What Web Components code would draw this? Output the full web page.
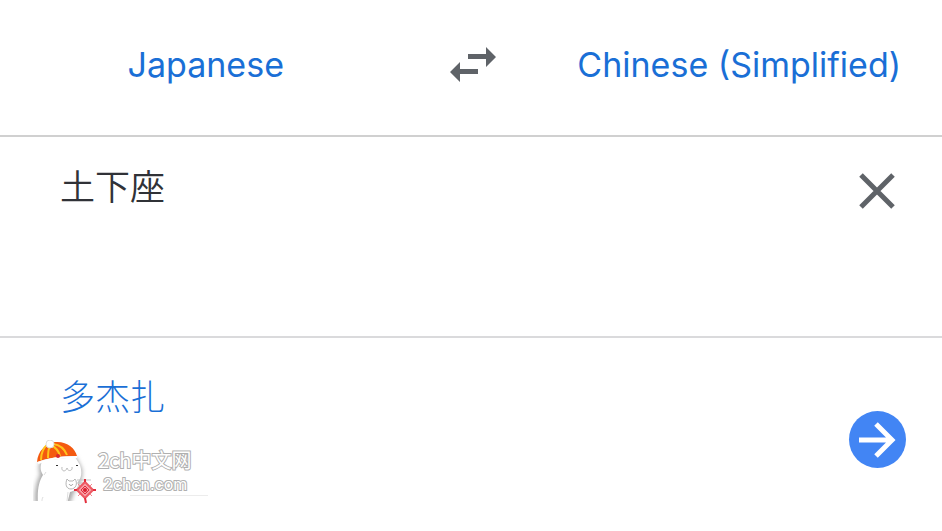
<!DOCTYPE html>
<html lang="en">
<head>
<meta charset="utf-8">
<meta name="viewport" content="width=device-width, initial-scale=1">
<title>Translate</title>
<style>
  body {
    margin: 0;
    background: #fff;
    font-family: Inter, "Liberation Sans", "Noto Sans CJK SC", sans-serif;
  }
</style>
</head>
<body>
<translate-app></translate-app>

<script>
class LanguageBar extends HTMLElement {
  constructor() {
    super();
    this.attachShadow({ mode: 'open' });
  }

  connectedCallback() {
    this.shadowRoot.innerHTML = `
    <style>
    :host {
      display: grid;
      grid-template-columns: 1fr 128px 1fr;
      align-items: center;
      height: 137px;
      padding: 0 0 6px 3px;
      box-sizing: border-box;
      border-bottom: 2px solid #d0d0d0;
    }

    button {
      padding: 0;
      border: none;
      background: none;
      color: #1a6fd6;
      font: inherit;
      font-size: 34px;
      line-height: 48px;
      white-space: nowrap;
      cursor: pointer;
    }

    svg {
      display: block;
      margin: auto;
    }
    </style>

    <button type="button"><slot name="from"></slot></button>
    <button type="button" aria-label="Swap languages">
      <svg width="46" height="36" viewBox="0 0 46 36" fill="#5f6368">
        <path d="M18 7h18V0l10 10-10 10v-8H18zM28 22H10v-7L0 25l10 10v-8h18z"/>
      </svg>
    </button>
    <button type="button"><slot name="to"></slot></button>
    `;
  }
}

class SourceText extends HTMLElement {
  constructor() {
    super();
    this.attachShadow({ mode: 'open' });
  }

  connectedCallback() {
    this.shadowRoot.innerHTML = `
    <style>
    :host {
      display: flex;
      align-items: flex-start;
      min-height: 201px;
      padding: 22px 45px 0 60px;
      box-sizing: border-box;
      border-bottom: 2px solid #dadadc;
    }

    textarea {
      flex: 1;
      height: 144px;
      padding: 0;
      border: none;
      outline: none;
      resize: none;
      background: none;
      color: #303237;
      font-family: "Noto Sans CJK JP", sans-serif;
      font-size: 35px;
      font-weight: 350;
      line-height: 52px;
    }

    button {
      margin-top: 12px;
      padding: 0;
      border: none;
      background: none;
      cursor: pointer;
    }

    svg {
      display: block;
    }
    </style>

    <textarea lang="ja" aria-label="Source text"></textarea>
    <button type="button" aria-label="Clear">
      <svg width="40" height="40" viewBox="0 0 40 40" stroke="#5f6368" stroke-width="5">
        <path d="M4 4l32 32M36 4L4 36"/>
      </svg>
    </button>
    `;
    const field = this.shadowRoot.querySelector('textarea');
    field.value = this.getAttribute('value');
    this.shadowRoot.querySelector('button').addEventListener('click', () => {
      field.value = '';
      field.focus();
    });
  }
}

class TranslationResult extends HTMLElement {
  constructor() {
    super();
    this.attachShadow({ mode: 'open' });
  }

  connectedCallback() {
    this.shadowRoot.innerHTML = `
    <style>
    :host {
      display: flex;
      justify-content: space-between;
      align-items: flex-start;
      padding: 31px 36px 60px 60px;
    }

    p {
      margin: 0;
      color: #1a6fd6;
      font-family: "Noto Sans CJK SC", sans-serif;
      font-size: 35px;
      font-weight: 300;
      line-height: 52px;
    }

    button {
      margin-top: 42px;
      padding: 0;
      border: none;
      border-radius: 50%;
      background: #4285f4;
      cursor: pointer;
    }

    svg {
      display: block;
    }
    </style>

    <p lang="zh-Hans"><slot></slot></p>
    <button type="button" aria-label="Open translation">
      <svg width="57" height="57" viewBox="0 0 57 57" fill="none" stroke="#fff" stroke-width="5">
        <path d="M10 29h33M27 13l16 16-16 16"/>
      </svg>
    </button>
    `;
  }
}

class SiteMark extends HTMLElement {
  constructor() {
    super();
    this.attachShadow({ mode: 'open' });
  }

  connectedCallback() {
    this.shadowRoot.innerHTML = `
    <style>
    :host {
      display: flex;
      align-items: flex-start;
      pointer-events: none;
    }

    svg {
      display: block;
    }

    div {
      padding-top: 6px;
      color: #fff;
      font-family: "Noto Sans CJK SC", sans-serif;
      -webkit-text-stroke: 2px #b0b0b0;
      paint-order: stroke fill;
    }

    span {
      display: block;
      font-size: 20px;
      line-height: 28px;
      white-space: nowrap;
    }

    span + span {
      padding-left: 5px;
      font-family: Inter, sans-serif;
      font-size: 16px;
      line-height: 21px;
    }
    </style>

    <svg width="65" height="64" viewBox="0 0 65 64" fill="none">
      <defs>
        <filter id="soft" x="-30%" y="-30%" width="160%" height="160%">
          <feGaussianBlur stdDeviation="2"/>
        </filter>
        <clipPath id="crop"><path d="M0 0h65v61H0z"/></clipPath>
      </defs>
      <g clip-path="url(#crop)">
        <path d="M7 22c-2 5-1 9 0 12C3 43 1 52 2 64h35l4-12c6-5 9-14 8-23l-6-12z" fill="#aaa" filter="url(#soft)"/>
        <path d="M9 21c-2 6-2 9 1 14C6 41 4 50 5 64h29l3-12c6-1 9-5 8-10 4-5 4-11 2-17l-5-8z" fill="#fff"/>
        <path d="M11 35l2-3M10 57c-1 2-1 3-1 4M35 52l-1 9" stroke="#ddd"/>
        <path d="M34 39l2 2h4l2-2c3 4 1 10-4 10s-6-5-4-10z" fill="#fff" stroke="#b5b5b5"/>
        <path d="M36 44c1 2 3 2 4 0" stroke="#aaa"/>
        <path d="M29 27c-1 5 4 5 5 1 1 4 6 3 5-1" stroke="#bbb"/>
        <path d="M44 40h14M44 43h8" stroke="#c5c5c5"/>
        <path d="M23 25h2v1h-2zM43 25h2v1h-2z" fill="#333"/>
      </g>
      <path d="M4 22C5 11 12 4 22 2c12-1 20 6 22 14-14 0-27 1-40 6z" fill="#f45a10"/>
      <path d="M15 4C10 8 8 14 8 20M17 5c-2 5-2 9-2 13M18 5c6 3 8 7 9 11M20 4c8 1 12 6 14 11" stroke="#ffc31b" stroke-width="2"/>
      <path d="M5 23c12-5 25-6 39-6" stroke="#fff" stroke-width="2"/>
      <circle cx="17" cy="4" r="4" fill="#fff" stroke="#ddd"/>
      <circle cx="25" cy="16" r="2" fill="#d92832"/>
      <path d="M52 42l8 8-8 8-8-8z" fill="#f7a1a7" stroke="#ed5963" stroke-width="2"/>
      <path d="M52 46l4 4-4 4-4-4z" stroke="#e32f3d"/>
      <path d="M52 39v3M41 50h3M60 50h3M52 58l1 5" stroke="#e32f3d" stroke-width="2"/>
      <path d="M45 44l2 2M59 44l-2 2M45 56l2-2M59 56l-2-2" stroke="#f2868e"/>
      <circle cx="52" cy="50" r="2" fill="#d91f2d"/>
    </svg>
    <div>
      <span>2ch中文网</span>
      <span>2chcn.com</span>
      <svg width="110" height="2" viewBox="0 0 110 2" fill="#ececec">
        <path d="M32 0h78v1H32z"/>
      </svg>
    </div>
    `;
  }
}

class TranslateApp extends HTMLElement {
  constructor() {
    super();
    this.attachShadow({ mode: 'open' });
  }

  connectedCallback() {
    this.shadowRoot.innerHTML = `
    <style>
    :host {
      display: block;
      position: relative;
      min-height: 100vh;
    }

    /* the site mark lies over the result pane */
    site-mark {
      position: absolute;
      left: 33px;
      top: 440px;
    }
    </style>

    <language-bar>
      <span slot="from">Japanese</span>
      <span slot="to">Chinese (Simplified)</span>
    </language-bar>
    <source-text value="土下座"></source-text>
    <translation-result>多杰扎</translation-result>
    <site-mark></site-mark>
    `;
  }
}

customElements.define('language-bar', LanguageBar);
customElements.define('source-text', SourceText);
customElements.define('translation-result', TranslationResult);
customElements.define('site-mark', SiteMark);
customElements.define('translate-app', TranslateApp);
</script>
</body>
</html>
